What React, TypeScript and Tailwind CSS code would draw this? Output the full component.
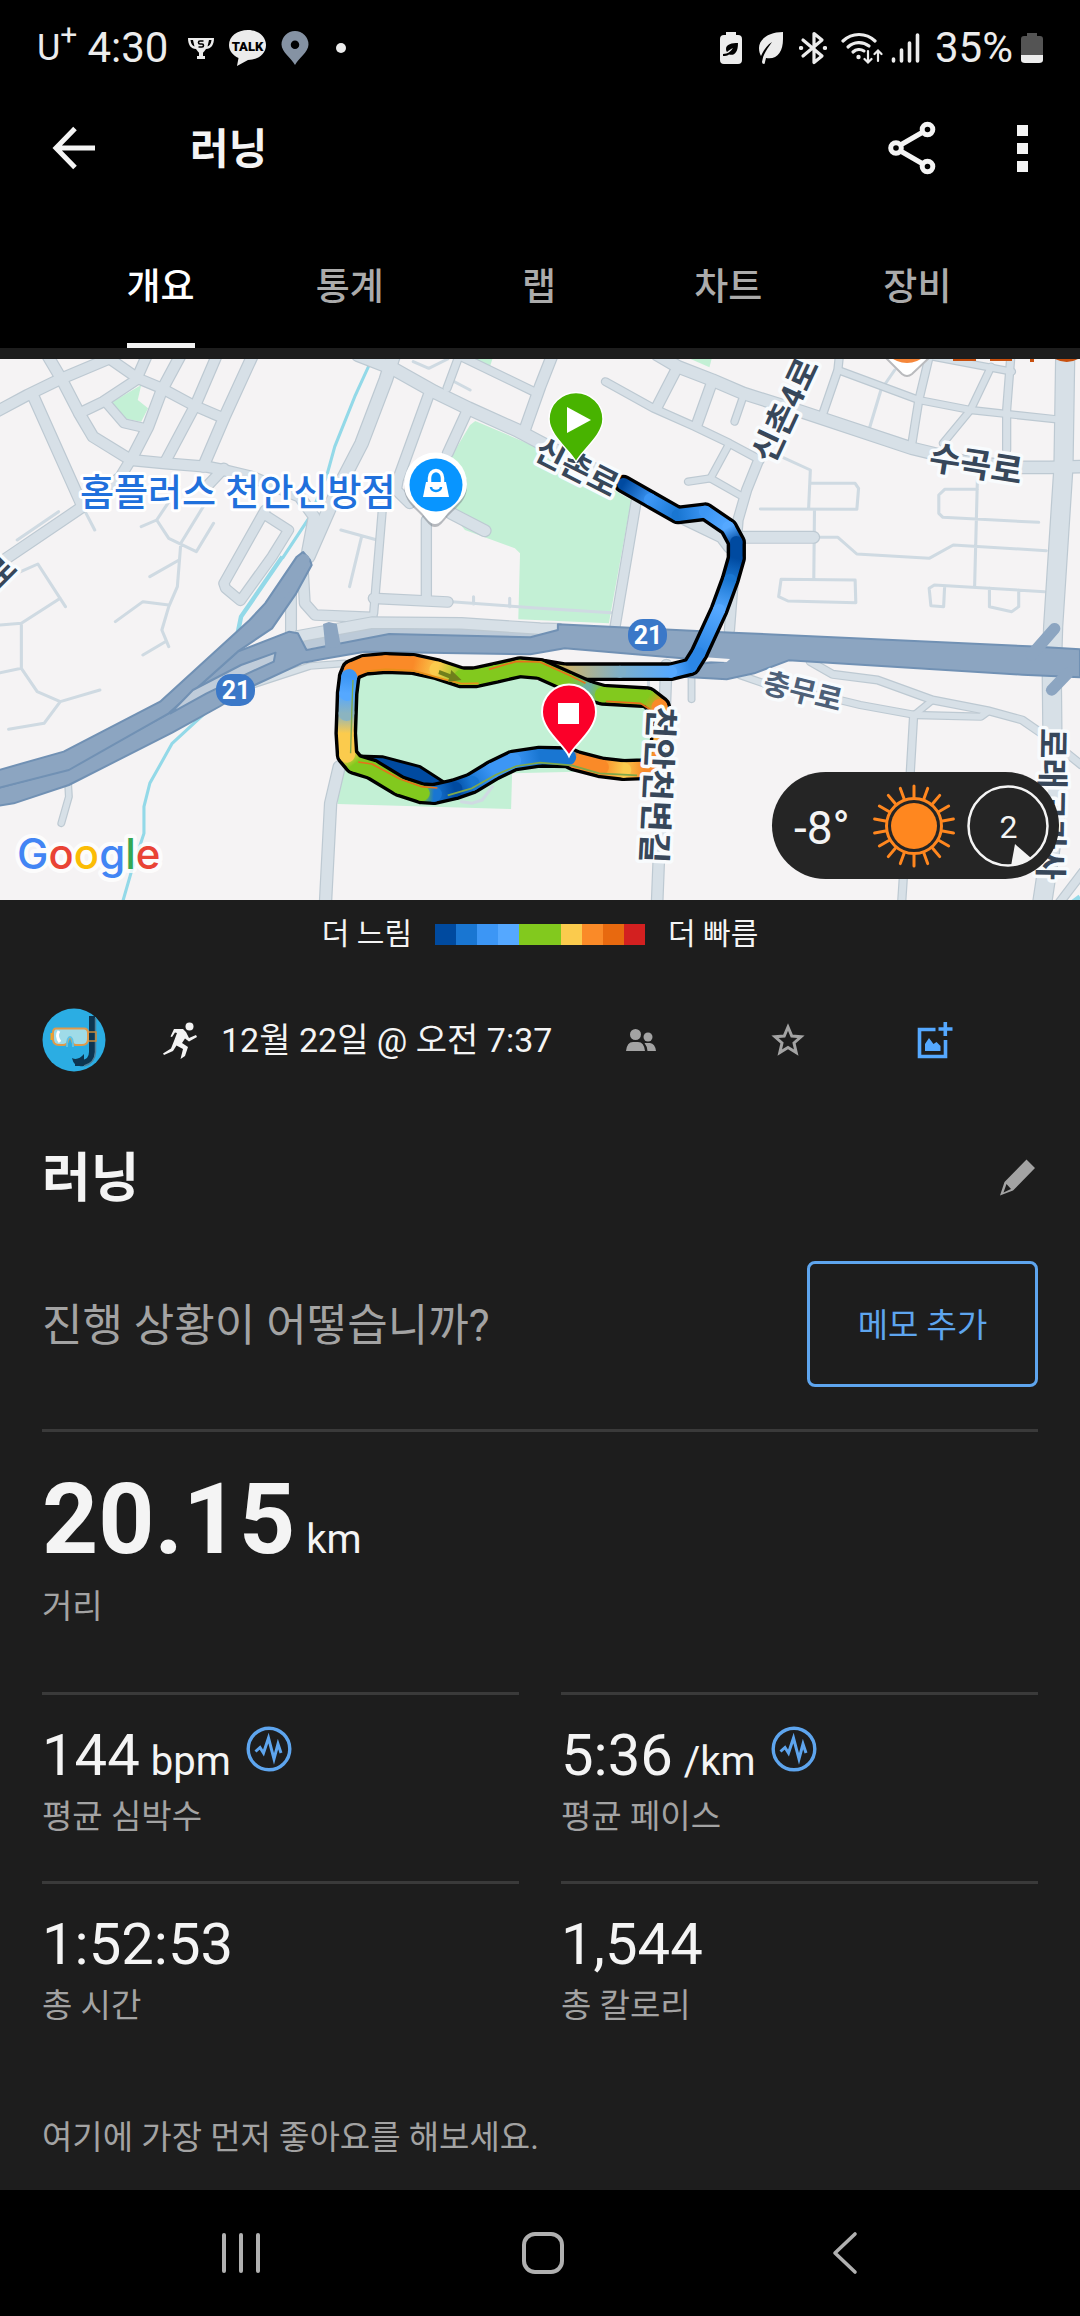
import React from "react";

type Road = { d: string; w: number };

const roads: Road[] = [
  { d: "M-10 215 L80 165 L180 115 L330 50", w: 30 },
  { d: "M140 50 L180 120 L230 220 L270 290 L380 360 L480 370 L600 380 L640 388 L730 410 L870 470 L912 530 L890 650", w: 30 },
  { d: "M95 165 L240 500 L-10 675", w: 30 },
  { d: "M240 500 L350 410 L385 350", w: 28 },
  { d: "M425 50 L395 120 L300 185 L230 220", w: 28 },
  { d: "M310 50 L400 115 L470 145 L560 195 L650 235", w: 28 },
  { d: "M522 50 L470 150 L430 260 L380 360", w: 30 },
  { d: "M628 50 L570 190 L480 365", w: 28 },
  { d: "M732 50 L650 235 L590 380", w: 30 },
  { d: "M308 188 L360 250 L420 264", w: 24 },
  { d: "M650 385 L600 440", w: 28 },
  { d: "M1040 45 L1140 85 L1260 155 L1360 205 L1500 270 L1600 325 L1808 430 L1968 525 L2098 590 L2120 620", w: 36 },
  { d: "M1142 50 L1120 120 L1050 310 L980 450 L895 650", w: 36 },
  { d: "M1250 150 L1155 420 L1150 450 L1190 490", w: 28 },
  { d: "M1360 205 L1300 340", w: 28 },
  { d: "M1310 520 L1408 572", w: 32 },
  { d: "M1332 50 L1298 145", w: 20 },
  { d: "M1340 50 L1560 160", w: 22 },
  { d: "M1604 45 L1568 140 L1520 280", w: 30 },
  { d: "M770 510 L650 730 L655 745 L698 782 L790 650 L838 570 L770 525", w: 26 },
  { d: "M880 700 L885 790 L915 825 L1080 832", w: 28 },
  { d: "M845 740 L845 880", w: 28 },
  { d: "M1110 510 L1085 820", w: 20 },
  { d: "M1238 540 L1238 780", w: 26 },
  { d: "M1085 775 L1300 786", w: 28 },
  { d: "M1910 45 L1968 80 L2068 120 L2158 160 L2328 215 L2648 325 L2708 340 L2800 365 L2968 382 L3048 382 L3140 380", w: 34 },
  { d: "M1758 125 L1898 205 L2018 260 L2118 310 L2208 360", w: 20 },
  { d: "M1968 80 L1908 200", w: 28 },
  { d: "M2068 125 L2023 255", w: 28 },
  { d: "M2158 170 L2133 245", w: 18 },
  { d: "M2437 50 L2433 90 L2388 225", w: 20 },
  { d: "M2433 90 L2668 180 L2818 210 L3068 238", w: 18 },
  { d: "M2698 50 L2668 180 L2648 310", w: 20 },
  { d: "M2878 80 L2818 210 L2738 310", w: 18 },
  { d: "M2935 50 L2923 210 L2923 330", w: 20 },
  { d: "M2708 50 L2938 95", w: 18 },
  { d: "M3093 50 L3088 380 L3058 860 L3054 1000 L3056 1200 L3068 1400 L3048 1540 L3026 1690", w: 52 },
  { d: "M2203 360 L2168 450 L2143 540 L2118 870", w: 26 },
  { d: "M2113 320 L2063 415 L2148 465", w: 18 },
  { d: "M1998 425 L2063 415", w: 18 },
  { d: "M2143 592 L2362 592", w: 32 },
  { d: "M1848 480 L1786 860", w: 26 },
  { d: "M985 1280 L960 1390 L945 1690", w: 32 },
  { d: "M198 1335 L200 1370 L178 1450", w: 16 },
  { d: "M1000 970 L900 978 L740 1032", w: 16 },
  { d: "M1935 975 L1908 1690", w: 30 },
  { d: "M2008 1010 L2008 1078", w: 16 },
  { d: "M2148 1005 L2218 1030 L2438 1080 L2498 1095 L2658 1125 L2848 1130 L2868 1115", w: 18 },
  { d: "M2353 965 L2418 1003 L2548 1020 L2708 1080 L2868 1112 L2968 1140 L3038 1190 L3140 1275", w: 20 },
  { d: "M2653 1125 L2643 1300 L2618 1690", w: 20 },
  { d: "M2708 1080 L2658 1122", w: 16 },
  { d: "M3145 1595 L3075 1690", w: 22 },
];

const lanes =
  "M1310 785 L1568 805 L1775 818 M1375 770 V792 M1480 775 V800 M990 570 L1095 600 M1050 590 L1015 740 M520 440 L455 540 L410 560 M455 540 L490 595 L570 635 L620 550 M590 500 L525 610 L515 740 L490 800 L470 870 L490 920 M520 660 L435 710 M490 795 L415 785 L335 845 M480 905 L415 945 M250 520 L275 570 M50 600 L170 515 M60 695 L110 672 L190 800 M175 775 L62 850 L0 855 M62 850 V985 L0 998 M62 985 L108 1055 L175 1085 L290 1050 M175 1085 L128 1150 L25 1168 M2268 350 L2353 390 L2348 505 M2353 430 L2483 430 L2493 445 L2488 508 L2208 507 M2365 510 L2363 715 M2373 592 L2433 592 L2488 642 L2698 655 L2768 615 L3038 632 M2268 718 L2483 720 L2485 788 L2288 783 L2261 770 Z M2838 420 L2830 738 M2838 448 L2743 448 L2726 465 V520 L2738 532 L3016 547 M2740 800 L2703 797 L2698 745 L2713 735 L3033 755 M2743 738 L2740 800 M2873 745 V800 L2938 815 L2958 800 V750 M2598 90 L2558 150 L2523 270 M1200 65 L1245 85 L1300 57 M1310 120 L1365 150 M1883 1000 V1080 M1340 1385 L1370 1390 L1400 1380 L1430 1340";

type Pt = [number, number, string];
const NAVY = "#004aa0";
const BLUE = "#1976d2";
const SKY = "#55a8ff";
const GREEN = "#82c91e";
const AMBER = "#fbcb4d";
const ORANGE = "#fa8a28";

const leg: Pt[] = [
  [1810, 432, NAVY],
  [1888, 478, "#3c96f5"],
  [1968, 525, BLUE],
  [2048, 515, "#3c96f5"],
  [2115, 562, SKY],
  [2138, 606, NAVY],
  [2138, 655, NAVY],
  [2120, 720, BLUE],
  [2088, 810, SKY],
  [2030, 940, "#2b86e6"],
  [2006, 980, "#2b86e6"],
  [1948, 995, SKY],
  [1800, 995, "#7fb0c8"],
  [1640, 995, "#cdb36a"],
  [1580, 985, GREEN],
];

const loop: Pt[] = [
  [1014, 1010, SKY],
  [1022, 990, ORANGE],
  [1060, 974, ORANGE],
  [1120, 969, ORANGE],
  [1200, 972, ORANGE],
  [1270, 988, AMBER],
  [1340, 1012, GREEN],
  [1380, 1012, GREEN],
  [1440, 998, GREEN],
  [1510, 982, GREEN],
  [1568, 987, GREEN],
  [1648, 1024, GREEN],
  [1710, 1052, "#6fb0a0"],
  [1750, 1064, GREEN],
  [1880, 1072, GREEN],
  [1915, 1100, ORANGE],
  [1925, 1140, AMBER],
  [1915, 1260, ORANGE],
  [1870, 1288, ORANGE],
  [1810, 1290, AMBER],
  [1745, 1282, ORANGE],
  [1670, 1262, ORANGE],
  [1650, 1252, BLUE],
  [1568, 1250, BLUE],
  [1490, 1262, "#3c96f5"],
  [1430, 1292, "#3c96f5"],
  [1370, 1330, BLUE],
  [1320, 1348, NAVY],
  [1260, 1362, BLUE],
  [1225, 1360, GREEN],
  [1160, 1338, GREEN],
  [1080, 1288, GREEN],
  [1030, 1272, GREEN],
  [1008, 1245, AMBER],
  [1004, 1180, AMBER],
  [1006, 1120, "#8bb4c0"],
  [1008, 1060, SKY],
  [1014, 1010, "#3c96f5"],
];

const line = (p: Pt[]) => "M" + p.map(([x, y]) => `${x} ${y}`).join(" L");

function Track({ id, pts, casing, width }: { id: string; pts: Pt[]; casing: number; width: number }) {
  return (
    <g fill="none" strokeLinejoin="round" strokeLinecap="round">
      <path d={line(pts)} stroke="#000" strokeWidth={casing} />
      {pts.slice(1).map(([x, y, c], i) => {
        const [px, py, pc] = pts[i];
        return (
          <g key={i}>
            <linearGradient id={`${id}${i}`} gradientUnits="userSpaceOnUse" x1={px} y1={py} x2={x} y2={y}>
              <stop offset="0" stopColor={pc} />
              <stop offset="1" stopColor={c} />
            </linearGradient>
            <path d={`M${px} ${py} L${x} ${y}`} stroke={`url(#${id}${i})`} strokeWidth={width} />
          </g>
        );
      })}
    </g>
  );
}

function Shield({ x, y }: { x: number; y: number }) {
  return (
    <g>
      <rect x={x - 20} y={y - 16} width="39" height="32" rx="15" fill="#3b78c8" />
      <text x={x} y={y + 9} textAnchor="middle" fontSize="25" fontWeight="700" fill="#fff">
        21
      </text>
    </g>
  );
}

function RoadLabel({ x, y, r, size, fill = "#37475a", children }: { x: number; y: number; r: number; size: number; fill?: string; children: string }) {
  return (
    <text
      transform={`translate(${x} ${y}) rotate(${r})`}
      y={size * 0.37}
      textAnchor="middle"
      fontSize={size}
      fontWeight="700"
      fill={fill}
      stroke="#f8fbfd"
      strokeWidth="7"
      strokeLinejoin="round"
      paintOrder="stroke"
    >
      {children}
    </text>
  );
}

function RouteMap() {
  return (
    <svg viewBox="0 0 1080 541" preserveAspectRatio="xMidYMid slice" className="block h-[541px] w-full" role="img" aria-label="경로 지도">
      <rect width="1080" height="541" fill="#f5f3f4" />
      <g transform="scale(.34439 .33333) translate(0 -57)">
        <g fill="#c3f0d5">
          <path d="M320 190 L410 135 L400 180 L430 205 L410 245 L360 235 Z" />
          <path d="M1365 255 L1380 243 L1588 335 L1833 480 L1768 850 L1505 838 L1510 640 L1495 625 L1350 570 L1310 520 L1310 350 Z" />
          <path d="M1370 50 H1432 L1422 82 Z" />
          <path d="M1990 50 H2068 L2060 82 Z" />
          <path d="M1020 1000 L1200 985 L1350 1030 L1500 1000 L1668 1060 L1898 1090 L1898 1290 L1487 1300 L1484 1407 L980 1392 L990 1300 Z" />
        </g>
        <g fill="none" stroke="#93d9e8" strokeLinejoin="round">
          <path d="M1072 75 L1030 170 L972 320 L948 410 L900 530 L820 655" strokeWidth="9" />
          <path d="M820 650 L740 770 L700 830 L690 880" strokeWidth="13" />
          <path d="M600 1115 L500 1210 L435 1330 L418 1400 L418 1480 L380 1600 L355 1690" strokeWidth="9" />
          <path d="M3136 1670 L3110 1690" strokeWidth="14" />
        </g>
        <path d={lanes} fill="none" stroke="#cfdae2" strokeWidth="9" strokeLinejoin="round" strokeLinecap="round" />
        <g fill="none" stroke="#bdc9d2" strokeLinejoin="round" strokeLinecap="round">
          {roads.map((r) => (
            <path key={r.d} d={r.d} strokeWidth={r.w + 7} />
          ))}
        </g>
        <g fill="none" stroke="#d7e0e7" strokeLinejoin="round" strokeLinecap="round">
          {roads.map((r) => (
            <path key={r.d} d={r.d} strokeWidth={r.w} />
          ))}
        </g>
        <g fill="none" strokeLinejoin="round">
          <path d="M870 905 L1130 862 L1568 880" stroke="#bccad8" strokeWidth="50" />
          <path d="M860 890 L1080 848 L1340 850 L1568 866 L1630 868" stroke="#bdc9d2" strokeWidth="38" />
          <path d="M860 890 L1080 848 L1340 850 L1568 866 L1630 868" stroke="#d7e0e7" strokeWidth="31" />
        </g>
        <g fill="#8ca5c1" stroke="#7191b4" strokeWidth="6" strokeLinejoin="round">
          <path d="M690 935 L840 875 L865 880 L890 930 L1130 882 L1540 892 L1620 870 L1620 853 L2128 878 L2988 919 L3136 928 V1012 L2968 1004 L2290 961 L2190 1000 L2110 1018 L1980 1010 L1980 975 L2100 965 L1640 925 L1540 943 L1060 935 L950 955 L880 968 L740 1035 L640 1098 L500 1178 L200 1335 L40 1390 L-10 1398 V1345 L190 1290 L490 1120 Z" />
          <path d="M-10 1292 L185 1235 L465 1085 L725 840 L770 790 L862 650 L880 636 L900 660 L905 675 L860 760 L790 865 L690 935 L490 1120 L200 1290 L-10 1345 Z" />
          <path d="M495 1120 L560 1050 L700 975 L800 938 L795 965 L720 1000 L600 1060 Z" fill="#bfccda" />
          <path d="M938 852 L955 846 L978 852 L990 920 L945 925 Z" stroke="none" />
          <path d="M2028 950 L2120 957 L2110 966 L2020 962 Z" fill="#f5f3f4" stroke="none" />
        </g>
        <g fill="none" stroke="#8ca5c1" strokeWidth="34" strokeLinecap="round">
          <path d="M884 658 L820 760" strokeWidth="30" />
          <path d="M3062 866 L2995 945" />
          <path d="M3100 1000 L3054 1050" />
        </g>
        <Track id="leg" pts={leg} casing={56} width={36} />
        <path d="M1040 1248 L1110 1250 L1220 1280 L1292 1328 L1250 1345 L1160 1330 Z" fill="#004aa0" stroke="#000" strokeWidth="9" strokeLinejoin="round" />
        <Track id="loop" pts={loop} casing={66} width={46} />
        <g fill="none" strokeWidth="5" strokeLinejoin="round">
          <path d="M1040 1266 L1080 1272 L1160 1316 L1225 1340 L1270 1344" stroke="#e8701a" />
          <path d="M1060 994 L1120 988 L1200 992 L1290 1018 L1340 1031 L1390 1030" stroke="#e8901a" />
          <path d="M1420 988 L1500 964 L1568 966 L1650 1004 L1700 1030" stroke="#e8701a" />
          <path d="M1760 1084 L1860 1090 L1890 1110" stroke="#e8701a" />
          <path d="M1025 1020 L1022 1100 L1018 1240" stroke="#7fa84a" strokeWidth="4" />
          <path d="M1300 1366 L1370 1345 L1440 1304 L1500 1278 L1568 1268 L1660 1276 L1740 1300 L1850 1306" stroke="#7fa84a" />
        </g>
        <path d="M1276 990 L1308 1003 L1310 990 L1340 1020 L1300 1026 L1304 1015 L1273 1002 Z" fill="#6f7f1c" />
      </g>

      <RoadLabel x={577} y={108} r={27} size={32}>신촌로</RoadLabel>
      <RoadLabel x={785} y={51} r={-65} size={33}>신촌4로</RoadLabel>
      <RoadLabel x={976} y={105} r={9} size={34}>수곡로</RoadLabel>
      <RoadLabel x={803} y={332} r={14} size={29} fill="#4d6078">충무로</RoadLabel>
      <RoadLabel x={658} y={426} r={93} size={34}>천안천변길</RoadLabel>
      <RoadLabel x={1052} y={445} r={91} size={33}>로래고가사</RoadLabel>
      <RoadLabel x={0} y={213} r={-45} size={32}>로</RoadLabel>
      <Shield x={236} y={331} />
      <Shield x={648} y={276} />

      <text x="80" y="147" fontSize="37" fontWeight="500" fill="#2070dc" stroke="#fff" strokeWidth="6" strokeLinejoin="round" paintOrder="stroke">
        홈플러스 천안신방점
      </text>
      <g>
        <path d="M435 168 C430 168 427 163 422 157 C412 147 404 141 404 127 A31.500 32 0 0 1 467 127 C467 141 458 147 448 157 C443 163 440 168 435 168 Z" fill="#7a8088" opacity=".5" />
        <path d="M435 165 C430 165 427 160 422 154 C412 144 404 138 404 125 A31.500 31.500 0 0 1 467 125 C467 138 458 144 448 154 C443 160 440 165 435 165 Z" fill="#fff" />
        <circle cx="436" cy="126" r="26.500" fill="#0895ff" />
        <path d="M426 123 H446 L449 138 H423 Z" fill="#fff" />
        <path d="M429.500 124 V119 A6.500 7.500 0 0 1 442.500 119 V124" fill="none" stroke="#fff" strokeWidth="3.500" />
        <path d="M431 128 A5 4 0 0 0 441 128" fill="none" stroke="#0895ff" strokeWidth="2.500" />
      </g>
      <g>
        <path d="M884 -3 L902 15 Q907 19 912 15 L931 -3 Z" fill="#fff" stroke="#b9babd" strokeWidth="2" />
        <ellipse cx="907" cy="-22" rx="26" ry="26" fill="#f5873a" />
        <path d="M953 0 h23 v2 h-23z M990 0 h22 v2 h-22z M1030 0 h4 v3 h-4z M1055 0 h23 q-11 6 -23 0z" fill="#c8500f" />
      </g>

      <path d="M576 103 C571 92 549 77 549 60 A27 26.500 0 0 1 603 60 C603 77 581 92 576 103 Z" fill="#48b300" stroke="#fff" strokeWidth="1.500" />
      <path d="M567 48 L591 61 L567 74 Z" fill="#fff" />
      <path d="M569 397 C564 386 542 371 542 353 A27 27.500 0 0 1 596 353 C596 371 574 386 569 397 Z" fill="#fb0029" stroke="#fff" strokeWidth="2" />
      <rect x="558" y="344" width="21" height="21" fill="#fff" />

      <text x="17" y="510" fontSize="42" fontWeight="500" fontFamily="Inter, sans-serif" stroke="#fff" strokeOpacity=".8" strokeWidth="8" strokeLinejoin="round" paintOrder="stroke">
        <tspan fill="#4285f4">G</tspan>
        <tspan fill="#e94335">o</tspan>
        <tspan fill="#fbbc05">o</tspan>
        <tspan fill="#4285f4">g</tspan>
        <tspan fill="#34a853">l</tspan>
        <tspan fill="#e94335">e</tspan>
      </text>
    </svg>
  );
}

function StatusBar() {
  return (
    <div className="flex h-24 items-center justify-between pl-[37px] pr-[37px] text-[#ececec]">
      <div className="flex items-center">
        <span className="text-[36px] leading-[48px]">
          U<sup className="text-[30px]">+</sup>
        </span>
        <span className="ml-[10px] text-[42px] leading-[48px]">4:30</span>
        <svg className="ml-[19px] h-[24px] w-[28px]" viewBox="0 0 28 24">
          <path d="M1 2 H27 C27 9 24 13 19 13 C18 15 16 16 16 17 V20 H18 V23 H10 V20 H12 V17 C12 16 10 15 9 13 C4 13 1 9 1 2 Z" fill="#ececec" />
          <path d="M3.500 4 C4 8 5.500 10 7.500 10.500 L6 4 Z M24.500 4 C24 8 22.500 10 20.500 10.500 L22 4 Z" fill="#000" />
          <path d="M16.500 5 H13 Q11.500 5 11.500 6.500 Q11.500 8 13 8 H15 Q16.500 8 16.500 9.500 Q16.500 11 15 11 H11.500" fill="none" stroke="#000" strokeWidth="1.600" />
        </svg>
        <svg className="ml-[14px] h-[36px] w-[38px]" viewBox="0 0 38 36">
          <path d="M19 0 C29 0 37 6.500 37 15 C37 24 29 30 19 30 L8 36 L9.500 28 C4 25.500 0 21 0 15 C0 6.500 8 0 19 0 Z" fill="#ececec" />
          <text x="18.500" y="20.500" textAnchor="middle" fontSize="13" fontWeight="900" fill="#000">TALK</text>
        </svg>
        <svg className="ml-[14px] h-[34px] w-[28px]" viewBox="0 0 28 34">
          <path d="M14 34 C11 28 0.500 21 0.500 13.500 A13.500 13.500 0 0 1 27.500 13.500 C27.500 21 17 28 14 34 Z M14 9.500 A4.200 4.200 0 1 0 14 18 A4.200 4.200 0 1 0 14 9.500 Z" fillRule="evenodd" fill="#8592a3" />
        </svg>
        <span className="ml-[27px] size-[10px] rounded-full bg-[#ececec]" />
      </div>
      <div className="flex items-center">
        <svg className="h-[34px] w-[22px]" viewBox="0 0 22 34">
          <path d="M6 1 H16 V4 H18 Q22 4 22 8 V29 Q22 33 18 33 H4 Q0 33 0 29 V8 Q0 4 4 4 H6 Z" fill="#ececec" />
          <path d="M18 12 C12 12 6 13 6 18 C6 20 7 21 7 21 C9 19 11 18 13 17 C11 20 8 23 3 23 V25 C5 25 8 25 9 23.500 C14 25 18 22 18 12 Z" fill="#000" />
        </svg>
        <svg className="ml-[17px] h-[34px] w-[25px]" viewBox="0 0 25 34">
          <path d="M24 1 C10 1 0 8 0 17 C0 21 1 23 2 25 C4 20 8 14 13 11 C9 17 4 23 3 31 Q3 33 5 33 Q6 33 6 31 L7 27 C18 29 24 21 24 8 Z" fill="#ececec" />
        </svg>
        <svg className="ml-[15px] h-[34px] w-[28px]" viewBox="0 0 28 34" fill="none" stroke="#ececec" strokeWidth="3.200" strokeLinejoin="round" strokeLinecap="round">
          <path d="M4 9 L23 25 L15 31.500 V2.500 L23 9 L4 25" />
          <path d="M1.800 17 h.5 M25.700 17 h.5" strokeWidth="4" />
        </svg>
        <svg className="ml-[14px] h-[34px] w-[42px]" viewBox="0 0 42 34" fill="none" stroke="#ececec" strokeLinecap="round">
          <path d="M2 10 A23 23 0 0 1 34 10" strokeWidth="3.200" />
          <path d="M7 16 A16 16 0 0 1 28 15" strokeWidth="3.200" />
          <path d="M12 21 A9 9 0 0 1 23 20" strokeWidth="3.200" />
          <circle cx="17.500" cy="26" r="2.200" fill="#ececec" stroke="none" />
          <path d="M27 20 V31 M23.500 28 L27 31.500 L30.500 28 M37 30 V20 M33.500 23 L37 19.500 L40.500 23" strokeWidth="2.200" />
        </svg>
        <svg className="ml-[8px] h-[34px] w-[30px]" viewBox="0 0 30 34" fill="none" stroke="#ececec" strokeWidth="3.600" strokeLinecap="round">
          <path d="M2.500 28 V30 M10.500 19 V30 M18.500 12 V30 M26.500 4 V30" />
        </svg>
        <span className="ml-[14px] text-[42px] leading-[48px]">35%</span>
        <svg className="ml-[8px] h-[32px] w-[22px]" viewBox="0 0 22 32">
          <path d="M6 1 H16 V4 H19 Q22 4 22 7 V23 H0 V7 Q0 4 3 4 H6 Z" fill="#545454" />
          <path d="M0 23 H22 V28 Q22 31 18 31 H4 Q0 31 0 28 Z" fill="#ececec" />
        </svg>
      </div>
    </div>
  );
}

const tabs = ["개요", "통계", "랩", "차트", "장비"];

function Header() {
  return (
    <header className="bg-black">
      <StatusBar />
      <div className="flex h-[104px] items-center pl-[50px] pr-[52px]">
        <button aria-label="뒤로">
          <svg className="size-[48px]" viewBox="0 0 48 48" fill="none" stroke="#f4f4f4" strokeWidth="5">
            <path d="M45 24 H7 M25 4.500 L6 24 L25 43.500" />
          </svg>
        </button>
        <h1 className="ml-[92px] flex-1 pt-1 text-[42px] font-bold leading-[56px] text-[#f4f4f4]">러닝</h1>
        <button aria-label="공유">
          <svg className="h-[56px] w-[48px]" viewBox="0 0 48 56" fill="none" stroke="#f4f4f4" strokeWidth="5">
            <circle cx="39.500" cy="9.500" r="5.300" />
            <circle cx="8" cy="28" r="5.300" />
            <circle cx="39.500" cy="46.500" r="5.300" />
            <path d="M12.500 25 L35 12 M12.500 31 L35 44" />
          </svg>
        </button>
        <button aria-label="더보기" className="ml-[81px] flex flex-col gap-[7px]">
          <span className="size-[11px] bg-[#f4f4f4]" />
          <span className="size-[11px] bg-[#f4f4f4]" />
          <span className="size-[11px] bg-[#f4f4f4]" />
        </button>
      </div>
      <nav className="grid h-[148px] grid-cols-5 pl-[66px] pr-[68px]">
        {tabs.map((t, i) => (
          <button key={t} className="flex flex-col items-center justify-between pt-[60px]">
            <span className={i === 0 ? "text-[37px] font-medium leading-[56px] text-white" : "text-[37px] font-medium leading-[56px] text-[#ababab]"}>{t}</span>
            {i === 0 && <span className="h-[5px] w-[68px] bg-[#f2f2f2]" />}
          </button>
        ))}
      </nav>
    </header>
  );
}

function Weather() {
  return (
    <div className="absolute bottom-[21px] right-[21px] flex h-[107px] w-[287px] items-center rounded-full bg-[#252525] pl-[22px] pr-[9px] text-[#f4f4f4]">
      <span className="flex-1 pt-1 text-[46px] leading-[56px]">-8°</span>
      <svg className="size-[84px]" viewBox="0 0 84 84">
        <circle cx="42" cy="42" r="23" fill="#ff871f" />
        <circle cx="42" cy="42" r="27.500" fill="none" stroke="#ff871f" strokeWidth="3" />
        {Array.from({ length: 18 }, (_, i) => (
          <path key={i} d="M42 13 V2" stroke="#ff871f" strokeWidth="3" strokeLinecap="round" transform={`rotate(${i * 20} 42 42)`} />
        ))}
      </svg>
      <svg className="ml-[10px] size-[84px]" viewBox="0 0 84 84">
        <circle cx="42" cy="42" r="39.500" fill="none" stroke="#f4f4f4" strokeWidth="2.500" />
        <path d="M49 60 L65 74 Q56 81 45 82 Z" fill="#f4f4f4" />
        <text x="42.500" y="54" textAnchor="middle" fontSize="32" fill="#f4f4f4">2</text>
      </svg>
    </div>
  );
}

function Legend() {
  return (
    <div className="flex h-[68px] items-center justify-center gap-[23px] text-[30px] leading-[44px] text-[#f4f4f4]">
      <span>더 느림</span>
      <div className="flex h-[21px]">
        <span className="w-[21px] bg-[#004a9f]" />
        <span className="w-[21px] bg-[#1976d2]" />
        <span className="w-[21px] bg-[#3c96f5]" />
        <span className="w-[21px] bg-[#55a8ff]" />
        <span className="w-[42px] bg-[#82c91e]" />
        <span className="w-[21px] bg-[#fbcb4d]" />
        <span className="w-[21px] bg-[#fa8a28]" />
        <span className="w-[21px] bg-[#e8690f]" />
        <span className="w-[21px] bg-[#d32020]" />
      </div>
      <span>더 빠름</span>
    </div>
  );
}

function Avatar() {
  return (
    <svg className="size-[64px]" viewBox="0 0 64 64" role="img" aria-label="프로필">
      <circle cx="32" cy="32" r="31.500" fill="#2bade3" />
      <path d="M50 8 V44 Q50 54 40 55 L33 55" fill="none" stroke="#0d3550" strokeWidth="6" />
      <path d="M30 50 Q36 53 42 46 L42 58 Q32 60 30 50 Z" fill="#0d3550" />
      <path d="M53.500 10 V44 Q53 55 42 58" fill="none" stroke="#4d7f99" strokeWidth="1.500" />
      <path d="M46 24 H54 V33 H46" fill="none" stroke="#c98a3a" strokeWidth="1.500" />
      <path d="M14 20.500 H42 Q46 20.500 46 25 V31 Q46 37 40 37 H34 Q31 37 30 33 Q28 27 26 33 Q25 37 21 37 H17 Q11 37 11 31 V25 Q11 20.500 14 20.500 Z" fill="#9fdbe8" stroke="#e09a4a" strokeWidth="2" />
      <path d="M17 23 Q13.500 28 18 34" fill="none" stroke="#fff" strokeWidth="3" />
      <path d="M25 39 Q25 29 28 29 Q31 29 31 39" fill="none" stroke="#5ec2e6" strokeWidth="2" />
      <path d="M9.500 25 V32" stroke="#f5a623" strokeWidth="2" />
    </svg>
  );
}

function Pulse() {
  return (
    <button aria-label="차트 보기" className="mt-[3px] self-start">
      <svg className="size-[46px]" viewBox="0 0 46 46" fill="none" stroke="#5ea5ee">
        <circle cx="23" cy="23" r="20.800" strokeWidth="3.400" />
        <path d="M9.500 25.500 L14 21.500 L17.500 27 L22.500 12 L28 33 L32 18 L35 27" strokeWidth="3" strokeLinejoin="miter" />
      </svg>
    </button>
  );
}

function Metric({ value, unit, label, chart }: { value: string; unit?: string; label: string; chart?: boolean }) {
  return (
    <div className="h-[189px] border-t-[3px] border-[#3a3a3a] pt-[28px]">
      <div className="flex h-[64px] items-baseline text-[58px] leading-[64px] text-[#f4f4f4]">
        <span>{value}</span>
        {unit && <span className="ml-[11px] mr-[15px] text-[40px] leading-[64px]">{unit}</span>}
        {chart && <Pulse />}
      </div>
      <div className="mt-2 text-[33px] leading-[44px] text-[#a3a3a3]">{label}</div>
    </div>
  );
}

function ActivityActions() {
  return (
    <div className="flex h-[144px] items-center pr-[30px]">
      <Avatar />
      <svg className="ml-[57px] h-[37px] w-[35px]" viewBox="0 0 35 37">
        <circle cx="26.500" cy="4.500" r="4" fill="#f4f4f4" />
        <path d="M11 7 L20 7 L23 10 L26 16 L33 13 L34 15 L26 19.500 L22 16.500 L19 21 L25 25 L22 34 L17.500 37 L20 27 L13.500 23.500 L10 29 L1 33 L0 31.500 L8 26.500 L11 19 L14 11 L12 10.500 L9 15 L7.500 14.500 Z" fill="#f4f4f4" />
      </svg>
      <time className="ml-[23px] flex-1 whitespace-nowrap text-[34px] leading-[44px] text-[#f4f4f4]">12월 22일 @ 오전 7:37</time>
      <button aria-label="공개 범위" className="flex w-[147px] justify-center">
        <svg className="h-[24px] w-[30px]" viewBox="0 0 30 24" fill="#a3a3a3">
          <circle cx="9.500" cy="6.500" r="5.500" />
          <circle cx="22" cy="9" r="4.500" />
          <path d="M0 23 Q1 14 7 14 H12 Q18 14 19 23 Z M18.500 15 H24 Q29 15.500 30 23 H21.500 Q21 18 18.500 15 Z" />
        </svg>
      </button>
      <button aria-label="즐겨찾기" className="flex w-[147px] justify-center">
        <svg className="h-[36px] w-[38px]" viewBox="0 0 38 36" fill="none" stroke="#a3a3a3" strokeWidth="3">
          <path d="M19 5 L22.800 14 L32 14.800 L25 21 L27.200 30.500 L19 25.400 L10.800 30.500 L13 21 L6 14.800 L15.200 14 Z" />
        </svg>
      </button>
      <button aria-label="사진 추가" className="flex w-[147px] justify-center">
        <svg className="h-[38px] w-[36px]" viewBox="0 0 36 38">
          <path d="M18.500 8.500 H2.500 V35.500 H28.500 V19" fill="none" stroke="#55a8ff" strokeWidth="3.600" />
          <path d="M28.300 1 V15 M21.500 8 H35.500" stroke="#55a8ff" strokeWidth="3.600" />
          <path d="M8 30 V23 L12 17 L16.500 23 L19.500 21 L23.500 25 V30 Z" fill="#55a8ff" />
        </svg>
      </button>
    </div>
  );
}

export default function App() {
  return (
    <div className="flex min-h-screen flex-col bg-[#1d1d1d] font-['Roboto','Noto_Sans_CJK_KR',sans-serif]">
      <Header />
      <section className="relative mt-[11px]">
        <RouteMap />
        <Weather />
      </section>
      <Legend />
      <main className="flex-1 px-[42px]">
        <ActivityActions />
        <div className="flex h-[130px] items-center justify-between">
          <h2 className="pt-1 text-[53px] font-bold leading-[64px] text-[#f4f4f4]">러닝</h2>
          <button aria-label="제목 편집">
            <svg className="size-[40px]" viewBox="0 0 40 40" fill="#a3a3a3">
              <path d="M28.500 2.500 L37 11 L15 33.500 L2 38.500 L6.500 25 Z M8.500 27 L5.500 35.500 L13 32 Z" fillRule="evenodd" />
            </svg>
          </button>
        </div>
        <div className="flex items-center justify-between pb-[42px] pt-[19px]">
          <p className="pt-1 text-[44px] leading-[56px] text-[#a3a3a3]">진행 상황이 어떻습니까?</p>
          <button className="h-[126px] w-[231px] rounded-lg border-[3px] border-[#5ea5ee] pt-1 text-[33px] leading-[44px] text-[#5ea5ee]">메모 추가</button>
        </div>
        <div className="h-[263px] border-t-[3px] border-[#3a3a3a] pt-[32px]">
          <div className="flex items-baseline text-[#f4f4f4]">
            <span className="text-[98px] font-bold leading-[112px]">20.15</span>
            <span className="ml-[11px] text-[40px] leading-[64px]">km</span>
          </div>
          <div className="mt-[9px] text-[33px] leading-[44px] text-[#a3a3a3]">거리</div>
        </div>
        <div className="grid grid-cols-2 gap-x-[42px]">
          <Metric value="144" unit="bpm" label="평균 심박수" chart />
          <Metric value="5:36" unit="/km" label="평균 페이스" chart />
          <Metric value="1:52:53" label="총 시간" />
          <Metric value="1,544" label="총 칼로리" />
        </div>
        <p className="pb-[30px] pt-[46px] text-[33px] leading-[44px] text-[#a3a3a3]">여기에 가장 먼저 좋아요를 해보세요.</p>
      </main>
      <nav className="grid h-[126px] grid-cols-3 bg-black pl-[90px] pr-[84px]">
        <button aria-label="최근 앱" className="flex items-center justify-center gap-[13px]">
          <span className="h-[40px] w-[4px] rounded-full bg-[#b0b0b0]" />
          <span className="h-[40px] w-[4px] rounded-full bg-[#b0b0b0]" />
          <span className="h-[40px] w-[4px] rounded-full bg-[#b0b0b0]" />
        </button>
        <button aria-label="홈" className="flex items-center justify-center">
          <span className="size-[42px] rounded-[13px] border-4 border-[#b0b0b0]" />
        </button>
        <button aria-label="뒤로 가기" className="flex items-center justify-center">
          <svg className="h-[44px] w-[26px]" viewBox="0 0 26 44" fill="none" stroke="#b0b0b0" strokeWidth="3.600" strokeLinecap="round" strokeLinejoin="round">
            <path d="M23 3 L3 22 L23 41" />
          </svg>
        </button>
      </nav>
    </div>
  );
}
